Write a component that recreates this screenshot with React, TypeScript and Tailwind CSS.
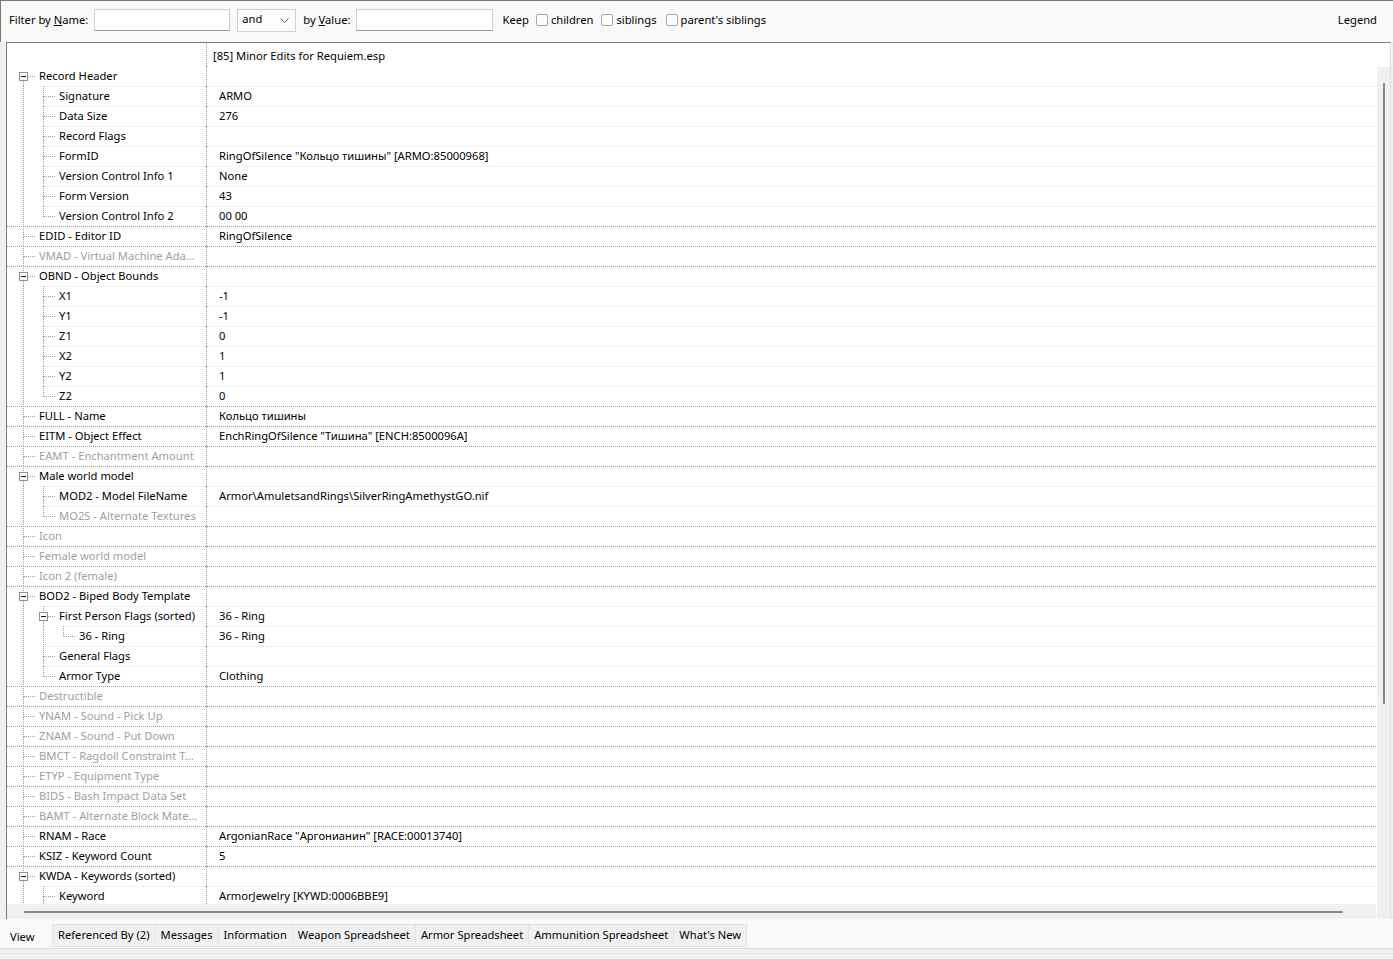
import React from "react";

type Row = { l: number; t: string; v?: string; d?: boolean; box?: boolean };

const rows: Row[] = [
  { l: 0, t: "Record Header", box: true },
  { l: 1, t: "Signature", v: "ARMO" },
  { l: 1, t: "Data Size", v: "276" },
  { l: 1, t: "Record Flags" },
  { l: 1, t: "FormID", v: 'RingOfSilence "Кольцо тишины" [ARMO:85000968]' },
  { l: 1, t: "Version Control Info 1", v: "None" },
  { l: 1, t: "Form Version", v: "43" },
  { l: 1, t: "Version Control Info 2", v: "00 00" },
  { l: 0, t: "EDID - Editor ID", v: "RingOfSilence" },
  { l: 0, t: "VMAD - Virtual Machine Ada...", d: true },
  { l: 0, t: "OBND - Object Bounds", box: true },
  { l: 1, t: "X1", v: "-1" },
  { l: 1, t: "Y1", v: "-1" },
  { l: 1, t: "Z1", v: "0" },
  { l: 1, t: "X2", v: "1" },
  { l: 1, t: "Y2", v: "1" },
  { l: 1, t: "Z2", v: "0" },
  { l: 0, t: "FULL - Name", v: "Кольцо тишины" },
  { l: 0, t: "EITM - Object Effect", v: 'EnchRingOfSilence "Тишина" [ENCH:8500096A]' },
  { l: 0, t: "EAMT - Enchantment Amount", d: true },
  { l: 0, t: "Male world model", box: true },
  { l: 1, t: "MOD2 - Model FileName", v: "Armor\\AmuletsandRings\\SilverRingAmethystGO.nif" },
  { l: 1, t: "MO2S - Alternate Textures", d: true },
  { l: 0, t: "Icon", d: true },
  { l: 0, t: "Female world model", d: true },
  { l: 0, t: "Icon 2 (female)", d: true },
  { l: 0, t: "BOD2 - Biped Body Template", box: true },
  { l: 1, t: "First Person Flags (sorted)", v: "36 - Ring", box: true },
  { l: 2, t: "36 - Ring", v: "36 - Ring" },
  { l: 1, t: "General Flags" },
  { l: 1, t: "Armor Type", v: "Clothing" },
  { l: 0, t: "Destructible", d: true },
  { l: 0, t: "YNAM - Sound - Pick Up", d: true },
  { l: 0, t: "ZNAM - Sound - Put Down", d: true },
  { l: 0, t: "BMCT - Ragdoll Constraint T...", d: true },
  { l: 0, t: "ETYP - Equipment Type", d: true },
  { l: 0, t: "BIDS - Bash Impact Data Set", d: true },
  { l: 0, t: "BAMT - Alternate Block Mate...", d: true },
  { l: 0, t: "RNAM - Race", v: 'ArgonianRace "Аргонианин" [RACE:00013740]' },
  { l: 0, t: "KSIZ - Keyword Count", v: "5" },
  { l: 0, t: "KWDA - Keywords (sorted)", box: true },
  { l: 1, t: "Keyword", v: "ArmorJewelry [KYWD:0006BBE9]" },
];

const tabs = [
  "Referenced By (2)",
  "Messages",
  "Information",
  "Weapon Spreadsheet",
  "Armor Spreadsheet",
  "Ammunition Spreadsheet",
  "What's New",
];

const lineX = (k: number) => 16 + 20 * k;
const textLeft = (l: number) => 32 + 20 * l;

// the list is scrolled, so anything that runs off the end keeps going
function hasNext(i: number) {
  const lvl = rows[i].l;
  if (lvl === 0) return true;
  for (let j = i + 1; j < rows.length; j++) {
    if (rows[j].l < lvl) return false;
    if (rows[j].l === lvl) return true;
  }
  return true;
}

function continues(i: number, k: number) {
  if (k === 0) return true;
  for (let j = i + 1; j < rows.length; j++) {
    if (rows[j].l < k) return false;
    if (rows[j].l === k) return true;
  }
  return true;
}

function TreeGlyph({ i }: { i: number }) {
  const r = rows[i];
  const x = lineX(r.l) + 0.5;
  const segs: [number, number, number][] = [];
  for (let k = 0; k < r.l; k++) {
    if (continues(i, k)) segs.push([lineX(k) + 0.5, 0, 20]);
  }
  const first = i === 0;
  const next = hasNext(i);
  if (r.box) {
    if (!first) segs.push([x, 0, 6]);
    if (next) segs.push([x, 15, 20]);
  } else {
    segs.push([x, 0, 11]);
    if (next) segs.push([x, 11, 20]);
  }
  const hStart = r.box ? lineX(r.l) + 5 : lineX(r.l) + 1;
  return (
    <svg className="absolute left-0 top-0" width="200" height="20" shapeRendering="crispEdges">
      {segs.map(([sx, y1, y2], n) => (
        <line key={n} x1={sx} x2={sx} y1={y1} y2={y2} stroke="#a0a0a0" strokeDasharray="1 1" />
      ))}
      <line x1={hStart} x2={textLeft(r.l) - 4} y1={10.5} y2={10.5} stroke="#a0a0a0" strokeDasharray="1 1" />
      {r.box && (
        <g>
          <rect x={lineX(r.l) - 3.5} y={6.5} width={8} height={8} fill="#fafafa" stroke="#919191" />
          <line x1={lineX(r.l) - 2} x2={lineX(r.l) + 3} y1={10.5} y2={10.5} stroke="#1a1a1a" />
        </g>
      )}
    </svg>
  );
}

function TreeRow({ i }: { i: number }) {
  const r = rows[i];
  const top = r.l === 0 && i > 0;
  const sepLeft = r.l === 0 ? 0 : lineX(r.l) + 1;
  return (
    <div className="relative flex h-[20px] shrink-0">
      {i > 0 && (
        <span
          className={`absolute right-0 top-0 border-t border-dotted ${top ? "border-[#a0a0a0]" : "border-[#e2e2e2]"}`}
          style={{ left: sepLeft }}
        />
      )}
      <div className="relative h-full w-[200px] shrink-0 overflow-hidden border-r border-dotted border-[#a0a0a0]">
        <TreeGlyph i={i} />
        <div
          className={`absolute top-0 flex h-full items-center whitespace-nowrap ${r.d ? "text-[#a0a0a0]" : "text-black"}`}
          style={{ left: textLeft(r.l) }}
        >
          {r.t}
        </div>
      </div>
      <div className="flex items-center whitespace-nowrap pl-[12px] text-black">{r.v}</div>
    </div>
  );
}

function Check() {
  return <span className="inline-block h-[12px] w-[12px] rounded-[2px] border border-[#a8a8a8] bg-[#fdfdfd]" />;
}

export default function App() {
  return (
    <div className="h-[959px] w-[1393px] overflow-hidden bg-[#f0f0f0] font-['Noto_Sans',sans-serif] text-[11.2px] leading-none text-black">
      {/* Filter toolbar */}
      <div className="flex h-[42px] items-center border-t border-l border-[#7a7a7a] bg-[#f9f9f9] pb-[3px] pl-[8px] pr-[16px]">
        <span>
          Filter by <span className="underline">N</span>ame:
        </span>
        <div className="ml-[6px] h-[22px] w-[136px] border border-[#cfcfcf] border-b-[#9a9a9a] bg-white" />
        <div className="ml-[7px] flex h-[23px] w-[59px] items-center justify-between border border-[#d0d0d0] bg-[#fdfdfd] pl-[4px] pr-[6px]">
          <span className="-mt-[2px]">and</span>
          <svg width="9" height="5" viewBox="0 0 9 5">
            <path d="M0.5 0.5 L4.5 4.5 L8.5 0.5" fill="none" stroke="#555" strokeWidth="1" />
          </svg>
        </div>
        <span className="ml-[7px]">
          by <span className="underline">V</span>alue:
        </span>
        <div className="ml-[6px] h-[22px] w-[137px] border border-[#cfcfcf] border-b-[#9a9a9a] bg-white" />
        <span className="ml-[9px]">Keep</span>
        <span className="ml-[7px] flex items-center gap-[3px]">
          <Check />
          children
        </span>
        <span className="ml-[8px] flex items-center gap-[3px]">
          <Check />
          siblings
        </span>
        <span className="ml-[9px] flex items-center gap-[3px]">
          <Check />
          parent's siblings
        </span>
        <span className="ml-auto">Legend</span>
      </div>

      {/* Record tree */}
      <div className="ml-[6px] flex h-[877px] w-[1385px] flex-col border-l border-t border-r border-l-[#7a7a7a] border-t-[#7a7a7a] border-r-[#e0e0e0] bg-white">
        <div className="flex h-[23px] shrink-0">
          <div className="h-full w-[200px] shrink-0 border-r border-dotted border-[#a0a0a0]" />
          <div className="flex items-center whitespace-nowrap pl-[6px] pt-[2px]">[85] Minor Edits for Requiem.esp</div>
        </div>
        <div className="flex flex-1 gap-[1px]">
          <div className="flex flex-1 flex-col">
            <div className="flex h-[838px] flex-col overflow-hidden">
              {rows.map((_, i) => (
                <TreeRow key={i} i={i} />
              ))}
            </div>
            <div className="relative h-[15px] bg-[#f0f0f0]">
              <div className="absolute left-[17px] top-[7px] h-[2px] w-[1319px] rounded-full bg-[#868686]" />
            </div>
          </div>
          <div className="relative mt-[1px] w-[13px] bg-[#f0f0f0]">
            <div className="absolute left-[6px] top-[16px] h-[621px] w-[2px] rounded-full bg-[#868686]" />
          </div>
        </div>
      </div>

      {/* Tabs */}
      <div className="flex h-[29px] items-start bg-[#f9f9f9]">
        <div className="flex h-[29px] w-[53px] items-center pl-[10px] pt-[7px]">View</div>
        <div className="mt-[5px] flex">
          {tabs.map((t) => (
            <div
              key={t}
              className="-ml-[1px] flex h-[23px] items-center whitespace-nowrap border border-[#e3e3e3] bg-[#f0f0f0] pb-[1px] pl-[5px] pr-[5px]"
            >
              {t}
            </div>
          ))}
        </div>
      </div>
      <div className="h-[5px] border-t border-[#dcdcdc] bg-[#f0f0f0]" />
      <div className="h-[6px] border-t border-[#e4e4e4] bg-[#f0f0f0]" />
    </div>
  );
}
